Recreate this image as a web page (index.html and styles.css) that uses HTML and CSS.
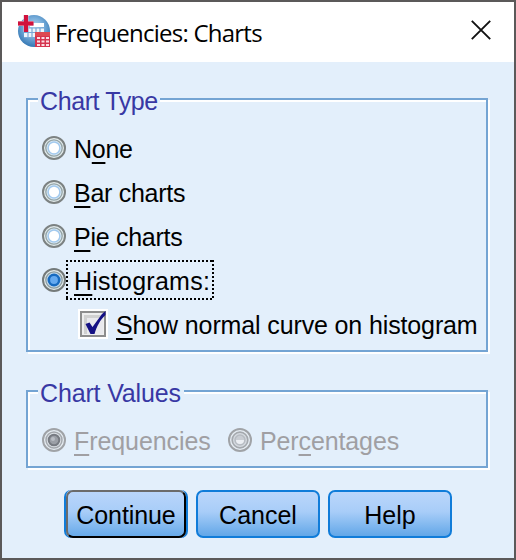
FILE: index.html
```html
<!DOCTYPE html>
<html lang="en">
<head>
<meta charset="utf-8">
<title>Frequencies: Charts</title>
<link rel="stylesheet" href="styles.css">
</head>
<body>
<svg width="0" height="0" class="defs" aria-hidden="true">
  <defs>
    <symbol id="radio" viewBox="0 0 24 24">
      <circle cx="12" cy="12" r="11" fill="#e4ecec" stroke="#7c8282" stroke-width="2"/>
      <circle cx="12" cy="12" r="8.200" fill="#dce9f2" stroke="#94a4a7" stroke-width="1.300"/>
      <circle cx="12" cy="12" r="5.900" fill="#fff" stroke="#a3caee" stroke-width="1.500"/>
    </symbol>
    <symbol id="radio-on" viewBox="0 0 24 24">
      <circle cx="12" cy="12" r="11" fill="#e4ecec" stroke="#747a7a" stroke-width="2"/>
      <circle cx="12" cy="12" r="8.200" fill="#c3d9ea" stroke="#8d9da0" stroke-width="1.300"/>
      <circle cx="12" cy="12" r="5.200" fill="#65aaf0" stroke="#176bc0" stroke-width="2.600"/>
    </symbol>
    <symbol id="radio-off-dim" viewBox="0 0 24 24">
      <circle cx="12" cy="12" r="11" fill="#e6edf3" stroke="#a0a3a7" stroke-width="2"/>
      <circle cx="12" cy="12" r="7.800" fill="#d6dbe1" stroke="#a5a9ae" stroke-width="1.700"/>
      <circle cx="12" cy="12" r="5" fill="#c9cdd3" stroke="#b7bcc2" stroke-width="1.500"/>
      <path d="M8 12h8a4 4 0 0 1-8 0z" fill="#eceff3"/>
    </symbol>
    <symbol id="radio-on-dim" viewBox="0 0 24 24">
      <circle cx="12" cy="12" r="11" fill="#e6edf3" stroke="#a0a3a7" stroke-width="2"/>
      <circle cx="12" cy="12" r="8" fill="#dce1e6" stroke="#a5a9ae" stroke-width="1.500"/>
      <circle cx="12" cy="12" r="5.300" fill="#9b9fa6" stroke="#777b82" stroke-width="2"/>
      <circle cx="11" cy="11" r="2" fill="#b9bdc4"/>
    </symbol>
  </defs>
</svg>
<div class="window">
  <header class="titlebar">
    <svg class="app-icon" viewBox="0 0 32 32">
      <defs>
        <radialGradient id="globe" cx=".5" cy=".4" r=".6">
          <stop offset="0" stop-color="#c5def1"/><stop offset=".5" stop-color="#79aedb"/><stop offset="1" stop-color="#3478b4"/>
        </radialGradient>
      </defs>
      <circle cx="16" cy="16" r="16" fill="url(#globe)"/>
      <path d="M6 13h20v10H6z" fill="#edf5fc"/>
      <path d="M6 13h20M6 17.500h20M6 22.500h20M10 13v10M14 13v10M18 13v10M22 13v10" stroke="#78a9d6" stroke-width="1.200"/>
      <path d="M12 8h14v4H12z" fill="#fff"/>
      <path d="M17 17h15v15H17z" fill="#d5344f"/>
      <path d="M17 17h15v4H17z" fill="#dd4952"/>
      <path d="M19 22h3v2h-3zM23.500 22h3v2h-3zM28 22h3v2h-3zM19 25.500h3v2h-3zM23.500 25.500h3v2h-3zM28 25.500h3v2h-3zM19 29h3v2h-3zM23.500 29h3v2h-3zM28 29h3v2h-3z" fill="#fbdde4"/>
      <path d="M0 8.500h15.500M8 0v17" stroke="#dfb9cd" stroke-width="5"/>
      <path d="M0 8.500h15.500M8 0v17" stroke="#d1113c" stroke-width="4"/>
    </svg>
    <span class="title">Frequencies: Charts</span>
    <svg class="close" viewBox="0 0 20 20"><path d="M.8.8l18.400 18.400M19.200.8L.8 19.200" stroke="#111" stroke-width="1.900"/></svg>
  </header>
  <main class="content">
    <section class="group types">
      <h2 class="legend legend-type">Chart Type</h2>
      <div class="option"><svg class="radio"><use href="#radio"/></svg><span class="label none">N<u>o</u>ne</span></div>
      <div class="option"><svg class="radio"><use href="#radio"/></svg><span class="label bar"><u>B</u>ar charts</span></div>
      <div class="option"><svg class="radio"><use href="#radio"/></svg><span class="label pie"><u>P</u>ie charts</span></div>
      <div class="option"><svg class="radio"><use href="#radio-on"/></svg><span class="label focus"><u>H</u>istograms:</span></div>
      <div class="option nested">
        <svg class="check" viewBox="0 0 30 30">
          <path d="M0 0h30v30H0z" fill="#fff"/>
          <path d="M3 3h24v24H3z" fill="#eee" stroke="#8d8d8d" stroke-width="2"/>
          <path d="M6 6h18v19H6z" fill="#d0d0d0"/>
          <path d="M9 9h16v16H9z" fill="#e9e9ed"/>
          <path d="M7.500 15l4-1.500 3 4.500L24 5l3.500-3v4C22 11 19 17 16.500 25h-4z" fill="#151184"/>
        </svg>
        <span class="label show"><u>S</u>how normal curve on histogram</span>
      </div>
    </section>
    <section class="group values">
      <h2 class="legend legend-values">Chart Values</h2>
      <div class="option dim">
        <svg class="radio"><use href="#radio-on-dim"/></svg><span class="label freq"><u>F</u>requencies</span>
        <svg class="radio"><use href="#radio-off-dim"/></svg><span class="label perc">Per<u>c</u>entages</span>
      </div>
    </section>
    <footer class="buttons">
      <button class="btn default"><span>Continue</span></button>
      <button class="btn">Cancel</button>
      <button class="btn">Help</button>
    </footer>
  </main>
</div>
</body>
</html>
```
FILE: styles.css
```css
* { box-sizing: border-box; }

body {
  margin: 0;
  font-family: "Liberation Sans", Arial, sans-serif;
  font-size: 25px;
  color: #000;
}

.defs { display: block; }

.window {
  width: 516px;
  height: 560px;
  border: 2px solid #5b5959;
  background: #e3effb;
}

.titlebar {
  height: 60px;
  display: flex;
  align-items: center;
  padding: 0 23px 4px 16px;
  background: #fff;
}

.app-icon { width: 32px; height: 32px; margin-top: 2px; }

.title {
  margin-left: 5px;
  padding-top: 5px;
  font: 24px/32px "Open Sans", "Noto Sans", sans-serif;
  letter-spacing: -0.76px;
  white-space: nowrap;
}

.close { width: 20px; height: 20px; margin-left: auto; }

.content { padding: 36px 24px 0; }

.group {
  width: 462px;
  border: 2px solid #74a4d3;
  box-shadow: 2px 2px 0 #fff, inset 2px 2px 0 #fff;
  padding-left: 14px;
}

.types { height: 254px; }
.values { height: 78px; margin-top: 38px; }

.legend {
  height: 30px;
  margin: -14px 0 10px -4px;
  padding: 0 0 0 2px;
  background: #e3effb;
  color: #3838a4;
  font-size: 25px;
  font-weight: 400;
  line-height: 30px;
  white-space: nowrap;
}

.legend-type { width: 122px; letter-spacing: -0.4px; }
.legend-values { width: 146px; letter-spacing: -0.15px; }

.option {
  display: flex;
  align-items: center;
  height: 44px;
}

.radio { width: 24px; height: 24px; flex: none; }

.label {
  margin-left: 8px;
  line-height: 36px;
  padding-top: 2px;
  letter-spacing: -0.28px;
  white-space: nowrap;
}

.label u {
  text-decoration-thickness: 2px;
  text-underline-offset: 4px;
  text-decoration-skip-ink: none;
}

.show { letter-spacing: -0.13px; }

.focus {
  width: 148px;
  height: 40px;
  margin-left: 0;
  padding: 3px 0 0 8px;
  letter-spacing: 0.25px;
  background:
    repeating-linear-gradient(90deg, #000 0 2px, transparent 2px 4px) 0 0 / 100% 2px no-repeat,
    repeating-linear-gradient(90deg, #000 0 2px, transparent 2px 4px) 0 100% / 100% 2px no-repeat,
    repeating-linear-gradient(#000 0 2px, transparent 2px 4px) 0 0 / 2px 100% no-repeat,
    repeating-linear-gradient(#000 0 2px, transparent 2px 4px) 100% 0 / 2px 100% no-repeat;
}

.nested { padding-left: 36px; }
.check { width: 30px; height: 30px; flex: none; }

.dim { color: #a09fa3; }
.freq { width: 146px; margin-right: 8px; letter-spacing: -0.08px; }
.perc { letter-spacing: -0.12px; }

.buttons {
  display: flex;
  gap: 8px;
  margin: 22px 0 0 38px;
}

.btn {
  width: 124px;
  height: 48px;
  padding: 2px 0 0;
  border: 2px solid #107cd9;
  border-radius: 7px;
  background: linear-gradient(#bbd6fb, #a8cdf8 45%, #62a7e8);
  font: 25px/30px "Liberation Sans", Arial, sans-serif;
  letter-spacing: 0;
  color: #000;
}

.default {
  border-width: 0 2px;
  padding: 0;
  letter-spacing: -0.1px;
}

.default span {
  display: block;
  height: 48px;
  padding-top: 4px;
  border: 2px solid;
  border-color: #6b6b6b #000 #000 #6b6b6b;
  border-radius: 7px;
  line-height: 39px;
}
```
